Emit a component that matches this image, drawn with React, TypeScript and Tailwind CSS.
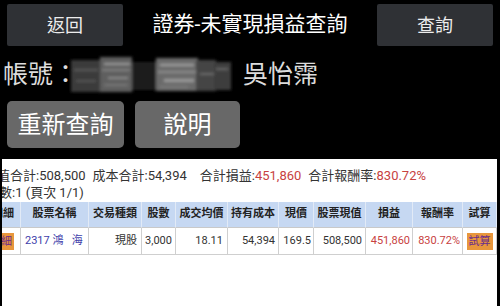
const FONT = "font-['Roboto','Noto_Sans_CJK_TC',sans-serif]";

const HEADERS = ['明細', '股票名稱', '交易種類', '股數', '成交均價', '持有成本', '現價', '股票現值', '損益', '報酬率', '試算'];

function Scribble() {
  // the blurred-out account number
  return (
    <svg width="165" height="44" viewBox="0 0 165 44" className="block">
      <defs>
        <filter id="smear" x="-10%" y="-10%" width="120%" height="120%">
          <feGaussianBlur stdDeviation="1.8" />
        </filter>
      </defs>
      <g filter="url(#smear)">
        <rect x="3" y="7" width="30" height="32" fill="#3a3a3a" />
        <rect x="32" y="4" width="32" height="35" fill="#5e5e5e" />
        <rect x="64" y="9" width="24" height="28" fill="#1e1e1e" />
        <rect x="88" y="5" width="42" height="33" fill="#6a6a6a" />
        <rect x="128" y="7" width="20" height="31" fill="#444" />
        <rect x="146" y="9" width="17" height="28" fill="#3c3c3c" />
        <rect x="36" y="10" width="26" height="2" fill="#9a9a9a" />
        <rect x="34" y="16" width="28" height="2" fill="#808080" />
        <rect x="40" y="24" width="20" height="2" fill="#8a8a8a" />
        <rect x="36" y="31" width="24" height="2" fill="#777" />
        <rect x="92" y="11" width="34" height="2" fill="#a0a0a0" />
        <rect x="90" y="18" width="38" height="2" fill="#8c8c8c" />
        <rect x="96" y="26" width="30" height="3" fill="#999" />
        <rect x="92" y="33" width="28" height="2" fill="#7a7a7a" />
        <rect x="6" y="16" width="24" height="2" fill="#5a5a5a" />
        <rect x="8" y="27" width="20" height="2" fill="#555" />
        <rect x="132" y="20" width="14" height="2" fill="#6a6a6a" />
        <rect x="148" y="15" width="12" height="2" fill="#666" />
      </g>
    </svg>
  );
}

export default function App() {
  return (
    <div className={`w-[500px] h-[306px] bg-black overflow-hidden flex flex-col ${FONT}`}>
      {/* top bar */}
      <div className="h-[50px] flex items-center px-[7px]">
        <button className="w-[116px] h-[42px] bg-[#2f3135] rounded-[2px] text-[18px] text-[#ececec]">返回</button>
        <div className="flex-1 text-center text-[21px] text-white">證券-未實現損益查詢</div>
        <button className="w-[116px] h-[42px] bg-[#2f3135] rounded-[2px] text-[18px] text-[#ececec]">查詢</button>
      </div>

      {/* account */}
      <div className="h-[50px] flex items-center pl-[3px] text-[25px] text-[#dcdcdc]">
        <span>帳號：</span>
        <div className="-ml-[10px]">
          <Scribble />
        </div>
        <span className="ml-[10px]">吳怡霈</span>
      </div>

      {/* actions */}
      <div className="mt-[1px] flex gap-[11px] px-[7px]">
        <button className="w-[117px] h-[47px] bg-[#686868] rounded-[5px] text-[24px] text-white">重新查詢</button>
        <button className="w-[105px] h-[47px] bg-[#686868] rounded-[5px] text-[24px] text-white">說明</button>
      </div>

      {/* result panel */}
      <div className="mt-[11px] ml-[2px] mr-[3px] flex-1 bg-white overflow-hidden pt-[8px] text-[#333]">
        <div className="text-[13px] leading-[17px] whitespace-nowrap -ml-[18px]">
          <span>市值合計:508,500</span>
          <span className="ml-[7px]">成本合計:54,394</span>
          <span className="ml-[13px]">合計損益:<span className="text-[#c8423f]">451,860</span></span>
          <span className="ml-[7px]">合計報酬率:<span className="text-[#c8423f]">830.72%</span></span>
        </div>
        <div className="text-[13px] leading-[17px] whitespace-nowrap -ml-[16px]">筆數:1 (頁次 1/1)</div>

        <div className="mt-[1px] -ml-[16px] w-[511px] grid grid-cols-[35px_68px_53px_34px_52px_51px_35px_52px_47px_50px_34px] text-[11px]">
          {HEADERS.map((h) => (
            <div
              key={h}
              className="h-[26px] flex items-center justify-center bg-[#c6d8f2] border-r border-b border-r-[#e2eaf6] border-b-[#c9c9c9] font-bold text-[#222] whitespace-nowrap"
            >
              {h}
            </div>
          ))}

          <div className="h-[27px] flex items-center pl-[2px] border-r border-b border-[#cfcfcf]">
            <span className="px-[2px] leading-[17px] bg-[#e8963c] text-[#6a2c8c] whitespace-nowrap">明細</span>
          </div>
          <div className="h-[27px] flex items-center pl-[4px] border-r border-b border-[#cfcfcf] text-[#4040aa] whitespace-nowrap">
            2317 鴻{'\u00a0\u00a0\u00a0'}海
          </div>
          <div className="h-[27px] flex items-center justify-end pr-[4px] border-r border-b border-[#cfcfcf]">現股</div>
          <div className="h-[27px] flex items-center justify-end pr-[3px] border-r border-b border-[#cfcfcf]">3,000</div>
          <div className="h-[27px] flex items-center justify-end pr-[4px] border-r border-b border-[#cfcfcf]">18.11</div>
          <div className="h-[27px] flex items-center justify-end pr-[3px] border-r border-b border-[#cfcfcf]">54,394</div>
          <div className="h-[27px] flex items-center justify-end pr-[2px] border-r border-b border-[#cfcfcf]">169.5</div>
          <div className="h-[27px] flex items-center justify-end pr-[3px] border-r border-b border-[#cfcfcf]">508,500</div>
          <div className="h-[27px] flex items-center justify-end pr-[2px] border-r border-b border-[#cfcfcf] text-[#c8423f]">451,860</div>
          <div className="h-[27px] flex items-center justify-end pr-[2px] border-r border-b border-[#cfcfcf] text-[#c8423f]">830.72%</div>
          <div className="h-[27px] flex items-center justify-center border-r border-b border-[#cfcfcf]">
            <span className="px-[2px] leading-[17px] bg-[#e8963c] text-[#6a2c8c] whitespace-nowrap">試算</span>
          </div>
        </div>
      </div>
    </div>
  );
}
